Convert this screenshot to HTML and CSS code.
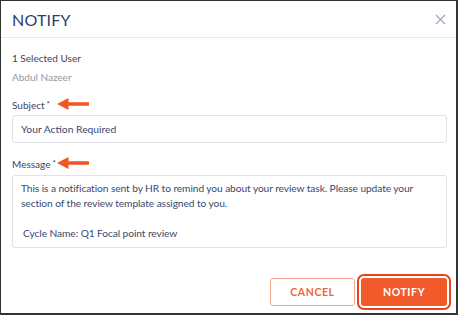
FILE: index.html
```html
<!DOCTYPE html>
<html lang="en">
<head>
    <meta charset="UTF-8">
    <meta name="viewport" content="width=device-width, initial-scale=1.0">
    <title>Notify</title>
    <link rel="stylesheet" href="styles.css">
</head>
<body>
    <div class="modal">
        <div class="modal-header">
            <h1 class="modal-title">NOTIFY</h1>
            <svg class="close" width="11" height="11" viewBox="0 0 11 11">
                <path d="M1 1L10 10M10 1L1 10" stroke="#9aa3b6" stroke-width="1.1" fill="none"/>
            </svg>
        </div>

        <div class="modal-body">
            <div class="selected">1 Selected User</div>
            <div class="user-name">Abdul Nazeer</div>

            <div class="label-row">
                <label for="subject">Subject<span class="req">*</span></label>
                <svg class="arrow" width="34" height="14" viewBox="0 0 34 14">
                    <path d="M33 5.2H12.5V1L1 7l11.5 6V8.8H33z" fill="#f0561f"/>
                </svg>
            </div>
            <div class="field" id="subject">Your Action Required</div>

            <div class="label-row">
                <label for="message">Message<span class="req">*</span></label>
                <svg class="arrow" width="34" height="14" viewBox="0 0 34 14">
                    <path d="M33 5.2H12.5V1L1 7l11.5 6V8.8H33z" fill="#f0561f"/>
                </svg>
            </div>
            <div class="field message" id="message">This is a notification sent by HR to remind you about your review task. Please update your<br>section of the review template assigned to you.<br><br><span class="cycle">Cycle Name: Q1 Focal point review</span></div>
        </div>

        <div class="modal-footer">
            <button class="btn btn-cancel">CANCEL</button>
            <button class="btn btn-notify">NOTIFY</button>
        </div>
    </div>
</body>
</html>
```

FILE: styles.css
```css
html, body {
    margin: 0;
    padding: 0;
}
body {
    font-family: Lato, "Open Sans", Arial, sans-serif;
    background: #fff;
}
.modal {
    box-sizing: border-box;
    width: 458px;
    height: 315px;
    border-style: solid;
    border-color: #333;
    border-width: 1px 2px 2px 1px;
    display: flex;
    flex-direction: column;
}
.modal-header {
    height: 36px;
    border-bottom: 1px solid #e6e8ec;
    display: flex;
    align-items: center;
    justify-content: space-between;
    padding: 0 10px 0 11px;
}
.modal-title {
    margin: 0;
    font-size: 16px;
    font-weight: 400;
    color: #2c3d6a;
    letter-spacing: 0.2px;
}
.close {
    margin-top: 1px;
}
.modal-body {
    padding: 13px 9px 0 11px;
    display: flex;
    flex-direction: column;
}
.selected {
    font-size: 10px;
    line-height: 14px;
    color: #3e4559;
}
.user-name {
    font-size: 10px;
    line-height: 14px;
    color: #8f99ab;
    margin-top: 5px;
}
.label-row {
    position: relative;
    margin-top: 13px;
    height: 14px;
    font-size: 10px;
    line-height: 14px;
}
.label-row label {
    color: #3e4559;
}
.req {
    font-size: 8px;
    vertical-align: 2px;
    margin-left: 2px;
}
.arrow {
    position: absolute;
    left: 44px;
    top: 0;
}
.field {
    box-sizing: border-box;
    border: 1px solid #dfe2e7;
    border-radius: 3px;
    color: #39496d;
}
#subject {
    margin-top: 4px;
    height: 28px;
    line-height: 26px;
    padding-left: 8px;
    font-size: 10.3px;
}
.message {
    margin-top: 5px;
    height: 73px;
    line-height: 15px;
    padding: 5px 8px;
    font-size: 10.2px;
    letter-spacing: -0.08px;
}
.cycle {
    padding-left: 2px;
}
.modal-footer {
    margin-top: auto;
    display: flex;
    justify-content: flex-end;
    gap: 6px;
    padding: 0 9px 7px 0;
}
.btn {
    box-sizing: border-box;
    height: 28px;
    border-radius: 3px;
    font-family: Lato, "Open Sans", Arial, sans-serif;
    font-size: 10.5px;
    font-weight: 700;
    letter-spacing: 0.6px;
    cursor: pointer;
}
.btn-cancel {
    width: 85px;
    background: #fff;
    color: #f0673f;
    border: 1px solid #f4a78c;
}
.btn-notify {
    width: 86px;
    background: #f15a2b;
    color: #fff;
    border: none;
    box-shadow: 0 0 0 2px #fff, 0 0 0 4px #e8431d;
}
```
